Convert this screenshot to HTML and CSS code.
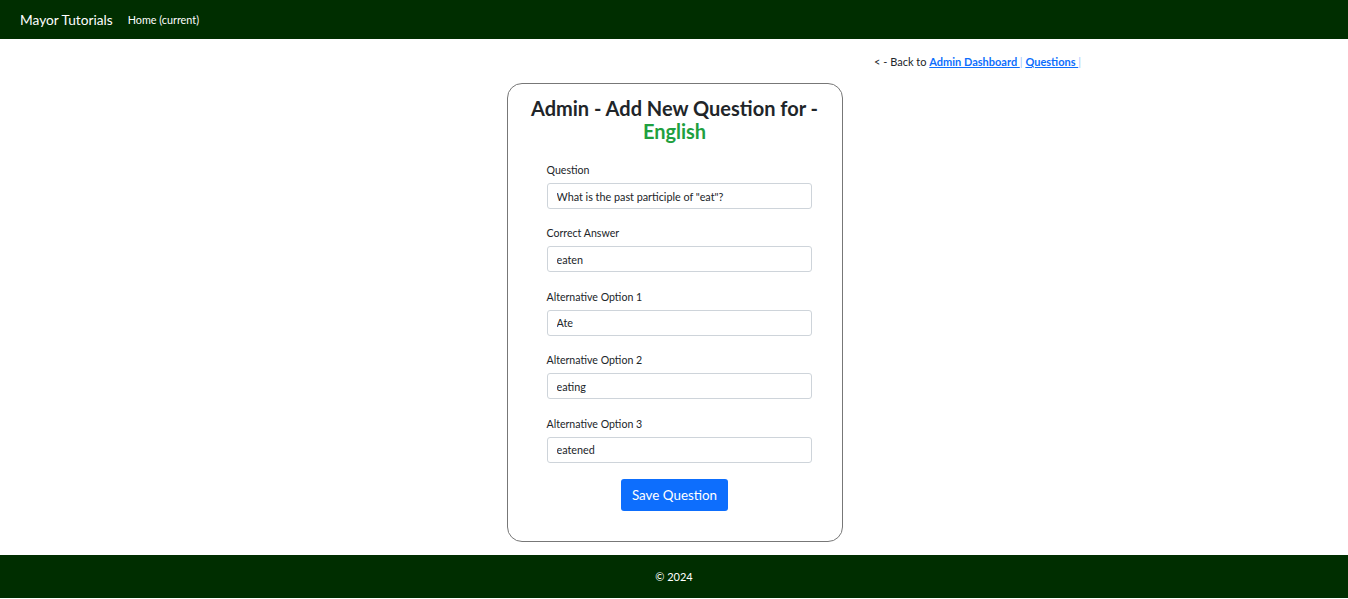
FILE: index.html
```html
<!DOCTYPE html>
<html lang="en">
<head>
<meta charset="utf-8">
<title>Mayor Tutorials - Add Question</title>
<link rel="stylesheet" href="styles.css">
</head>
<body>
<nav class="navbar">
  <a class="brand" href="#">Mayor Tutorials</a>
  <a class="nav-link" href="#">Home (current)</a>
</nav>
<main class="main">
  <div class="back-row">
    <span class="back">&lt; - Back to <a href="#">Admin Dashboard </a><span class="sep">|</span> <a href="#">Questions </a><span class="sep">|</span></span>
  </div>
  <div class="card">
    <h2 class="title">Admin - Add New Question for - <span class="subject">English</span></h2>
    <form class="form">
      <div class="group">
        <label>Question</label>
        <input class="input" type="text" value="What is the past participle of &quot;eat&quot;?">
      </div>
      <div class="group">
        <label>Correct Answer</label>
        <input class="input" type="text" value="eaten">
      </div>
      <div class="group">
        <label>Alternative Option 1</label>
        <input class="input" type="text" value="Ate">
      </div>
      <div class="group">
        <label>Alternative Option 2</label>
        <input class="input" type="text" value="eating">
      </div>
      <div class="group">
        <label>Alternative Option 3</label>
        <input class="input" type="text" value="eatened">
      </div>
      <div class="actions">
        <button class="btn" type="button">Save Question</button>
      </div>
    </form>
  </div>
</main>
<footer class="footer">© 2024</footer>
</body>
</html>
```
FILE: styles.css
```css
* { box-sizing: border-box; }
html, body { margin: 0; padding: 0; }
body {
  font-family: Lato, "Open Sans", sans-serif;
  color: #212529;
  background: #fff;
  height: 599px;
  display: flex;
  flex-direction: column;
}
.navbar {
  height: 39px;
  background: #002e00;
  display: flex;
  align-items: center;
  padding: 0 20px;
}
.brand {
  color: #fff;
  text-decoration: none;
  font-size: 13.7px;
  margin-right: 15px;
}
.nav-link {
  color: #fff;
  text-decoration: none;
  font-size: 10.8px;
}
.main {
  flex: 1;
  display: flex;
  flex-direction: column;
  align-items: center;
}
.back-row {
  width: 814px;
  display: flex;
  justify-content: flex-end;
  margin-top: 15px;
  height: 16px;
  font-size: 11px;
  line-height: 16px;
}
.back a {
  color: #0d6efd;
  font-weight: 700;
}
.sep { color: #9ec5fe; }
.card {
  margin: 13px 0 0 1px;
  width: 336px;
  border: 1px solid #777;
  border-radius: 15px;
  padding: 13px 0 30px;
}
.title {
  margin: 0 10px 18px;
  text-align: center;
  font-size: 20px;
  line-height: 23px;
  font-weight: 700;
}
.subject { color: #1fa03f; }
.form {
  padding: 0 30px 0 39px;
  display: flex;
  flex-direction: column;
}
.group {
  display: flex;
  flex-direction: column;
  margin-bottom: 15.4px;
}
.group label {
  font-size: 10.6px;
  line-height: 18px;
  margin-bottom: 4px;
}
.input {
  width: 100%;
  height: 26px;
  border: 1px solid #ced4da;
  border-radius: 3px;
  padding: 0 9px;
  font-family: inherit;
  font-size: 10.8px;
  color: #212529;
}
.actions {
  display: flex;
  justify-content: center;
  margin-top: 1px;
  margin-left: -9px;
}
.btn {
  background: #0d6efd;
  color: #fff;
  border: none;
  border-radius: 3px;
  height: 32px;
  padding: 0 11px;
  font-family: inherit;
  font-size: 13.4px;
}
.footer {
  height: 43px;
  background: #002e00;
  color: #fff;
  font-size: 11px;
  display: flex;
  align-items: center;
  justify-content: center;
  margin-bottom: 1px;
}
```
